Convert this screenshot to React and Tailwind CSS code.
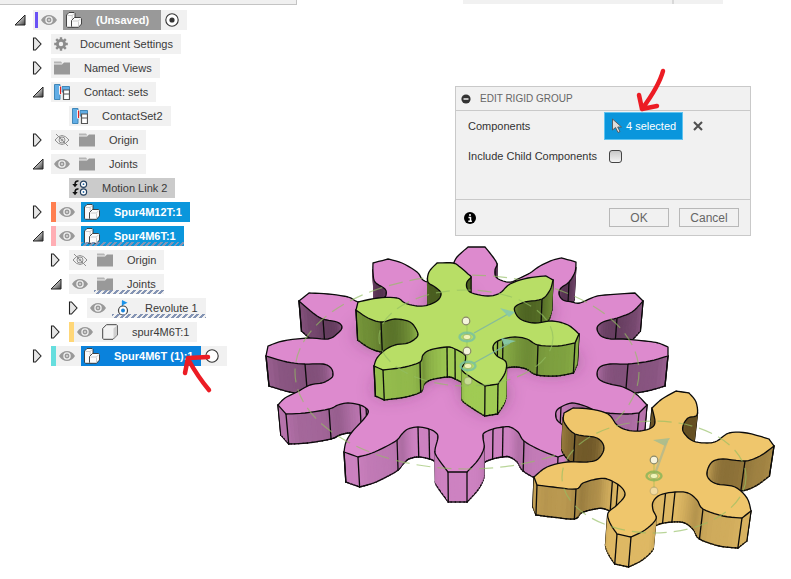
import React from "react";

/* ---------- browser tree icons ---------- */

function Expander({ open }) {
  return open ? (
    <svg className="block h-3 w-3" viewBox="0 0 12 12">
      <defs>
        <linearGradient id="openArrow" x1="0" y1="0" x2="1" y2="1">
          <stop offset="0.3" stopColor="#e8e8e8" />
          <stop offset="1" stopColor="#3a3a3a" />
        </linearGradient>
      </defs>
      <path d="M11 1V11H1Z" fill="url(#openArrow)" stroke="#222" strokeWidth="1" />
    </svg>
  ) : (
    <svg className="block h-3.5 w-3" viewBox="0 0 12 14">
      <path d="M1.500 1H3.500L9 7L3.500 13H1.500Z" fill="#e6e6e6" stroke="#222" strokeWidth="1.1" />
    </svg>
  );
}

function Eye({ off }) {
  return (
    <svg className="block h-3.5 w-4 shrink-0" viewBox="0 0 16 14">
      {off ? (
        <g fill="none" stroke="#8f8f8f" strokeWidth="1">
          <path d="M1 7Q8 -2 15 7Q8 16 1 7Z" />
          <circle cx="8" cy="7" r="3" />
          <circle cx="8" cy="7" r="1" />
          <path d="M2 1L14 13" />
        </g>
      ) : (
        <g>
          <path d="M0 7C4 0.300 12 0.300 16 7C12 13.700 4 13.700 0 7Z" fill="#999" />
          <circle cx="8" cy="7" r="3.100" fill="#999" stroke="#eee" strokeWidth="1.300" />
          <circle cx="8" cy="7" r="1" fill="#ddd" />
        </g>
      )}
    </svg>
  );
}

function Gear() {
  return (
    <svg className="block h-3.5 w-3.5 shrink-0" viewBox="0 0 14 14">
      <g stroke="#8c8c8c" fill="none">
        <circle cx="7" cy="7" r="3.6" strokeWidth="2.800" />
        <path d="M7 0.200V3M7 11V13.800M0.200 7H3M11 7H13.800M2.200 2.200L4.200 4.200M9.800 9.800L11.800 11.800M11.800 2.200L9.800 4.200M4.200 9.800L2.200 11.800" strokeWidth="2.400" />
      </g>
    </svg>
  );
}

function Folder() {
  return (
    <svg className="block h-4 w-4 shrink-0" viewBox="0 0 16 16">
      <path d="M0 1.500H7L8.500 3.500H0Z" fill="#b5b5b5" />
      <path d="M0 4.500H8L10 2.500H16V14.500H0Z" fill="#999" />
    </svg>
  );
}

function Contact() {
  return (
    <svg className="block h-4 w-4 shrink-0" viewBox="0 0 16 16">
      <path d="M0.500 0.500H6V15.500H0.500Z" fill="#62aee6" stroke="#4187b8" />
      <path d="M8 2.500H15.500V8H8Z" fill="#62aee6" stroke="#4187b8" />
      <path d="M6.200 2V10.500" stroke="#fff" strokeWidth="2.400" />
      <path d="M6.500 2.500V10" stroke="#e02020" strokeWidth="1.200" />
      <path d="M9.500 6H15.500V15.500H9.500ZM9.500 10H15.500" fill="#fff" stroke="#555" strokeWidth="1.200" />
    </svg>
  );
}

function Assembly() {
  return (
    <svg className="block h-4 w-4 shrink-0" viewBox="0 0 16 16">
      <g stroke="#333" strokeWidth="0.900" strokeLinejoin="round">
        <path d="M0.500 3L3 0.500H8L9 1.500V8L7 15.300H1.500L0.500 14.300Z" fill="#fbfbfb" />
        <path d="M5.500 8.500L8.500 5.500H14.500L15.500 6.500V12L12.500 15.300H6.500L5.500 14.300Z" fill="#fbfbfb" />
        <path d="M1.500 3.500H6L8.300 1.500M6.200 3.500V7M6.500 9H12.300L14.800 6.500M12.500 9.500V14.500" fill="none" stroke="#c6c6c6" />
      </g>
    </svg>
  );
}

function Cube() {
  return (
    <svg className="block h-4 w-4 shrink-0" viewBox="0 0 16 16">
      <path d="M0.700 4.500L4.500 0.700H14.500L15.300 1.500V11L11 15.300H1.700L0.700 14.500Z" fill="#f3f3f3" stroke="#444" strokeLinejoin="round" />
      <path d="M11.500 4.500L15 1.500V11L11.500 14.500Z" fill="#cfcfcf" />
    </svg>
  );
}

function MotionLink() {
  return (
    <svg className="block h-4 w-4 shrink-0" viewBox="0 0 16 16">
      <g fill="#fff" stroke="#24405f" strokeWidth="1.200">
        <circle cx="11.500" cy="4.200" r="3.100" />
        <circle cx="11.500" cy="12" r="3.100" />
      </g>
      <circle cx="11.500" cy="4.200" r="0.900" fill="#2468a8" />
      <circle cx="11.500" cy="12" r="0.900" fill="#2468a8" />
      <path d="M6.500 1Q3 0.500 3 4.500M6.500 9Q3 8.500 3 12.500" fill="none" stroke="#111" strokeWidth="1.600" />
      <path d="M0.300 4H5.700L3 7.300ZM0.300 12H5.700L3 15.300Z" fill="#111" />
    </svg>
  );
}

function Revolute() {
  return (
    <svg className="block h-4 w-4 shrink-0" viewBox="0 0 16 16">
      <path d="M7 0L12.500 2.800L7 5.500Z" fill="#1b93ea" />
      <path d="M7.500 1V8" stroke="#1b93ea" strokeWidth="1.300" />
      <circle cx="8" cy="10.500" r="4.500" fill="#fff" stroke="#444" strokeWidth="1.200" />
      <circle cx="8" cy="10.500" r="2" fill="#1b83d8" />
    </svg>
  );
}

const ICONS = {
  gear: Gear,
  folder: Folder,
  contact: Contact,
  assembly: Assembly,
  cube: Cube,
  link: MotionLink,
  revolute: Revolute,
};

/* ---------- browser tree ---------- */

const INDENT = ["pl-[15px]", "pl-[33px]", "pl-[51px]", "pl-[69px]"];

const ROWS = [
  { depth: 0, open: true, icon: "assembly", label: "(Unsaved)", eye: "on", bar: "bg-[#6a52f5]", tone: "grey", radio: "on", slim: true },
  { depth: 1, open: false, icon: "gear", label: "Document Settings", pad: "gap-3" },
  { depth: 1, open: false, icon: "folder", label: "Named Views" },
  { depth: 1, open: true, icon: "contact", label: "Contact: sets" },
  { depth: 2, icon: "contact", label: "ContactSet2" },
  { depth: 1, open: false, icon: "folder", label: "Origin", eye: "off" },
  { depth: 1, open: true, icon: "folder", label: "Joints", eye: "on" },
  { depth: 2, icon: "link", label: "Motion Link 2", dim: true },
  { depth: 1, open: false, icon: "assembly", label: "Spur4M12T:1", eye: "on", bar: "bg-[#ff7f50]", tone: "blue" },
  { depth: 1, open: true, icon: "assembly", label: "Spur4M6T:1", eye: "on", bar: "bg-[#ffaeb4]", tone: "blue", hatch: true },
  { depth: 2, open: false, icon: "folder", label: "Origin", eye: "off" },
  { depth: 2, open: true, icon: "folder", label: "Joints", eye: "on", hatch: true },
  { depth: 3, open: false, icon: "revolute", label: "Revolute 1", eye: "on", hatch: true },
  { depth: 2, open: false, icon: "cube", label: "spur4M6T:1", eye: "on", bar: "bg-[#ffd778]" },
  { depth: 1, open: false, icon: "assembly", label: "Spur4M6T (1):1", eye: "on", bar: "bg-[#66dede]", tone: "active", radio: "off", arrow: true },
];

const TONES = {
  grey: "bg-[#999999] text-white font-bold pr-3",
  blue: "bg-[#0a96dc] text-white font-bold pr-2",
  active: "bg-[#0a82dc] text-white font-bold pr-2",
};

function Hatch() {
  return (
    <span className="absolute right-0 bottom-0 left-0 h-1 bg-[repeating-linear-gradient(135deg,#8494b4_0px,#8494b4_2px,transparent_2px,transparent_4px)]" />
  );
}

function Row({ row }) {
  const Icon = ICONS[row.icon];
  const tone = row.tone ? TONES[row.tone] : "text-[#3a3a3a] pr-2";
  return (
    <li className={"flex h-5 items-center " + INDENT[row.depth]}>
      <button className="flex w-[18px] shrink-0" aria-label={"Toggle " + row.label}>
        {row.open !== undefined && (
          <span className="-ml-px">
            <Expander open={row.open} />
          </span>
        )}
      </button>
      <div className={"relative flex h-5 items-center " + (row.dim ? "bg-[#cbcbcb]" : "bg-[#f1f1f1]")}>
        {row.bar && <span className={"shrink-0 " + row.bar + (row.slim ? " ml-0.5 h-4 w-[3px]" : " h-5 w-[5px]")} />}
        {row.eye && (
          <span className="pr-1.5 pl-[3px]">
            <Eye off={row.eye === "off"} />
          </span>
        )}
        <div className={"relative flex h-5 items-center pl-[3px] whitespace-nowrap " + (row.pad || "gap-3.5") + " " + tone}>
          <Icon />
          <span>{row.label}</span>
          {row.hatch && <Hatch />}
        </div>
        {row.radio && (
          <svg className="mr-2 ml-1 block h-3.5 w-3.5 shrink-0" viewBox="0 0 14 14">
            <circle cx="7" cy="7" r="6.200" fill="#fff" stroke="#333" strokeWidth="1.100" />
            {row.radio === "on" && <circle cx="7" cy="7" r="2.600" fill="#333" />}
          </svg>
        )}
        {row.arrow && (
          <svg className="absolute -right-0.5 -bottom-[30px] h-12 w-12" viewBox="181 348 48 48" aria-hidden="true">
            <path d="M208 357L188 358L185 373M188 359Q198 377 209 390" fill="none" stroke="#ec1c24" strokeWidth="4.500" strokeLinecap="round" strokeLinejoin="round" />
          </svg>
        )}
      </div>
    </li>
  );
}

/* ---------- dialog ---------- */

function Dialog() {
  return (
    <form className="relative mt-[81px] mr-10 ml-auto w-[296px] border border-[#c9c9c9] bg-[#f1f1f1]" onSubmit={(e) => e.preventDefault()}>
      <header className="flex h-6 items-center border-b border-[#c9c9c9] pl-[5px]">
        <svg className="block h-2.5 w-2.5" viewBox="0 0 10 10">
          <circle cx="5" cy="5" r="4.600" fill="#333" />
          <path d="M2.500 5H7.500" stroke="#fff" strokeWidth="1.400" />
        </svg>
        <h2 className="pl-[9px] text-[10px] text-[#666]">EDIT RIGID GROUP</h2>
      </header>
      <div className="flex h-22 flex-col pl-3">
        <div className="flex h-[30px] items-center">
          <span className="w-34">Components</span>
          <button className="flex h-7 w-[79px] items-center gap-[3px] border border-[#5fc3f0] bg-[#0a96dc] pl-1.5 text-white">
            <svg className="block h-4 w-3" viewBox="0 0 12 16">
              <path d="M1.500 1V12L4.500 9.500L7 14.500L9 13.500L6.700 9H10.500Z" fill="#ddd" stroke="#555" strokeWidth="0.900" />
            </svg>
            <span className="whitespace-nowrap">4 selected</span>
          </button>
          <button className="ml-2.5" aria-label="Clear selection">
            <svg className="block h-2.5 w-2.5" viewBox="0 0 10 10">
              <path d="M1 1L9 9M9 1L1 9" stroke="#505050" strokeWidth="2.100" />
            </svg>
          </button>
        </div>
        <div className="flex h-[30px] items-center">
          <label htmlFor="child" className="w-[141px]">Include Child Components</label>
          <input id="child" type="checkbox" className="h-[13px] w-[13px] appearance-none rounded-[3px] border border-[#444] bg-linear-to-b from-[#c8c8c8] to-[#f4f4f4]" />
        </div>
      </div>
      <footer className="flex h-9 items-center gap-2.5 border-t border-[#c9c9c9] pr-[11px] pl-2">
        <svg className="mr-auto block h-3 w-3" viewBox="0 0 12 12">
          <circle cx="6" cy="6" r="6" fill="#000" />
          <path d="M6 2V4M4.500 5.500H6.500V9M4.300 9.200H7.900" stroke="#fff" strokeWidth="1.500" fill="none" />
        </svg>
        <button className="h-[19px] w-15 border border-[#b8b8b8] text-xs leading-none text-[#666]">OK</button>
        <button className="h-[19px] w-15 border border-[#b8b8b8] text-xs leading-none text-[#666]">Cancel</button>
      </footer>
      <svg className="pointer-events-none absolute -top-5 left-[175px] h-12 w-12" viewBox="631 67 48 48" aria-hidden="true">
        <path d="M663 71Q659 86 642 109M639 95L642 109L657 106" fill="none" stroke="#ec1c24" strokeWidth="4.500" strokeLinecap="round" strokeLinejoin="round" />
      </svg>
    </form>
  );
}

/* ---------- 3D gears ----------
   Each outline runs clockwise; "/" marks a sharp corner between smooth runs. */

const PINK = {
  center: [467, 365],
  dark: [66, 38, 62],
  light: [205, 130, 193],
  top: "#dd8ace",
  outline:
    "453,265 457,257 468,247/485,247/493,257 497,264 495,270 496,277 503,281 511,282 520,278 530,273 540,266 553,260 562,258/576,262/575,272 569,282 561,288 559,294 563,300 572,302 580,303 594,297 605,295 635,293/643,301/632,312 617,318 603,322 597,328 601,336 611,339 623,339 645,341 658,343 668,347/668,356/650,361 628,364 610,364 600,367 597,374 600,380 610,384 623,387 636,394 647,405/639,413/625,414 600,412 585,406 572,403 561,407 556,412 557,420 565,427 571,435 573,452/558,457/540,450 524,441 518,432 510,427 503,427 493,429 484,433 483,438 484,448 478,460 467,472/448,472/437,457 435,450 438,437 435,432 429,429 418,427 408,429 402,434 397,440 387,446 372,453 358,457/344,452/346,442 352,432 363,420 368,413 367,409 360,405 348,403 338,405 329,409 305,413 286,414/278,405/285,398 297,392 310,385 322,383 330,379 333,375 331,368 323,364 305,364 287,362 266,356/268,346/283,341 308,338 328,339 338,333 342,327 337,322 323,319 313,313 299,301/309,293/328,294 348,297 358,302 370,303 383,298 386,295 385,289 375,282 373,272 373,263/388,259/402,263 417,272 422,279 428,282 440,281 451,272 453,265",
  seams: "617,318 628,364 323,319 305,364 329,409 360,405 366,408 397,440 418,427 429,429 493,429 503,427 524,441 569,282 561,407",
};

const GREEN = {
  center: [466, 330],
  dark: [64, 82, 26],
  light: [160, 203, 84],
  top: "#b8de66",
  outline:
    "437,263 453,263 460,267 468,274 471,277 467,282 467,288 472,293 488,296 500,293 510,284 528,278 546,276/553,280/550,290 542,299 525,302 515,307 516,314 522,320 535,323 552,321 568,325 579,334/575,343/558,346 538,345 527,339 515,337 503,339 495,343 493,349 497,356 506,362 505,373 498,384/485,386/472,378 462,370 465,362 465,355 455,349 447,347 430,350 423,355 420,362 405,367 383,370/374,366/377,358 385,350 395,345 408,343 417,337 417,331 410,322 395,319 381,322 368,318 356,310/358,302/378,298 397,298 405,303 417,306 428,305 438,300 441,293 435,287 428,282 429,272 437,263",
  seams: "381,322 420,362 447,347 455,349 541,299 538,345 503,339 498,341",
};

const ORANGE = {
  center: [654, 465],
  dark: [88, 68, 28],
  light: [222, 184, 100],
  top: "#efc66c",
  outline:
    "652,408 662,399 676,391/689,393/696,402 697,415 688,418 683,426 684,433 693,441 707,443 717,441 729,433 747,433 769,439/774,446/760,456 745,461 723,459 712,462 707,472 709,479 717,484 735,487 747,498 751,511/742,518/723,516 703,509 697,500 688,493 675,492 660,495 653,502 653,510 656,519 645,530 631,537/617,534/610,523 608,513 617,505 625,495 620,486 607,479 597,479 583,483 576,489 553,487 537,485/534,477/547,467 567,462 587,462 598,459 604,448 597,438 575,434 564,422 564,413/573,408/590,409 608,414 617,425 627,430 640,431 651,428 655,422 652,408",
  seams: "745,461 576,489 613,482 619,485 665,494 674,492 703,509 575,434",
};

const parse = (s) => s.trim().split(" ").map((p) => p.split(",").map(Number));

function sampleOutline(text) {
  const out = [];
  const corners = [];
  let last = null;
  text.split("/").forEach((run) => {
    const pts = parse(run);
    const all = last ? [last, ...pts] : pts;
    for (let i = 0; i < all.length - 1; i++) {
      const p0 = all[Math.max(0, i - 1)];
      const p1 = all[i];
      const p2 = all[i + 1];
      const p3 = all[Math.min(all.length - 1, i + 2)];
      for (let k = 0; k < 5; k++) {
        const t = k / 5;
        const f = (a, b, c, d) =>
          0.5 * (2 * b + (c - a) * t + (2 * a - 5 * b + 4 * c - d) * t * t + (3 * b - a - 3 * c + d) * t * t * t);
        out.push([f(p0[0], p1[0], p2[0], p3[0]), f(p0[1], p1[1], p2[1], p3[1])]);
      }
    }
    last = pts[pts.length - 1];
    corners.push(last);
  });
  corners.pop();
  return { points: out, corners };
}

function build(gear) {
  const { points, corners } = sampleOutline(gear.outline);
  const n = points.length;
  const drop = (p) => [p[0] + (467 - p[0]) * 0.015, p[1] + 30];
  const items = [];
  const facing = points.map((p, i) => {
    const q = points[(i + 1) % n];
    const d = drop(p);
    return (q[1] - p[1]) * (d[0] - p[0]) - (q[0] - p[0]) * 30 > 0;
  });
  const level = points.map((p, i) => {
    const q = points[(i + 1) % n];
    const len = Math.hypot(q[0] - p[0], q[1] - p[1]) || 1;
    const nx = (q[1] - p[1]) / len;
    const ny = (p[0] - q[0]) / len;
    const rx = p[0] - gear.center[0];
    const ry = (p[1] - gear.center[1]) * 1.6;
    const r = Math.hypot(rx, ry) || 1;
    return 0.46 + (0.34 * (nx * rx + ny * ry)) / r + (0.3 * ry) / r;
  });
  points.forEach((p, i) => {
    const q = points[(i + 1) % n];
    if (facing[i]) {
      let sum = 0;
      for (let k = -3; k <= 3; k++) sum += level[(i + k + n) % n];
      const v = Math.min(1, Math.max(0.1, sum / 7));
      const c = gear.dark.map((a, k) => Math.round(a + (gear.light[k] - a) * v));
      const a = drop(p);
      const b = drop(q);
      items.push({ z: (p[1] + q[1]) / 2, kind: "wall", pts: [p, q, b, a].join(" "), fill: `rgb(${c.join(",")})` });
      items.push({ z: (p[1] + q[1]) / 2 + 1, kind: "line", from: a, to: b });
    }
    if (facing[i] !== facing[(i + n - 1) % n]) items.push({ z: p[1] + 1.5, kind: "line", from: p, to: drop(p) });
  });
  [...corners, ...parse(gear.seams)].forEach((s) => {
    let best = 0;
    points.forEach((p, i) => {
      if (Math.hypot(p[0] - s[0], p[1] - s[1]) < Math.hypot(points[best][0] - s[0], points[best][1] - s[1])) best = i;
    });
    if (facing[best] || facing[(best + n - 1) % n]) {
      items.push({ z: points[best][1] + 1.5, kind: "line", from: points[best], to: drop(points[best]) });
    }
  });
  items.sort((a, b) => a.z - b.z);
  return { items, path: "M" + points.map((p) => p.join(" ")).join("L") + "Z" };
}

const SOLIDS = { pink: build(PINK), green: build(GREEN), orange: build(ORANGE) };

function Solid({ solid, top, children }) {
  return (
    <g strokeLinejoin="round">
      {solid.items.map((it, i) =>
        it.kind === "wall" ? (
          <polygon key={i} points={it.pts} fill={it.fill} stroke={it.fill} strokeWidth="1.200" />
        ) : (
          <line key={i} x1={it.from[0]} y1={it.from[1]} x2={it.to[0]} y2={it.to[1]} stroke="#0b0b0b" strokeWidth="1.300" strokeLinecap="square" />
        )
      )}
      <path d={solid.path} fill={top} />
      {children}
      <path d={solid.path} fill="none" stroke="#0b0b0b" strokeWidth="1.300" />
    </g>
  );
}

function Pitch({ cx, cy, rx, ry }) {
  return <ellipse cx={cx} cy={cy} rx={rx} ry={ry} fill="none" stroke="#94bf62" strokeOpacity="0.65" strokeWidth="1.200" strokeDasharray="14 7" />;
}

function Dot({ x, y, faint }) {
  return <circle cx={x} cy={y} r="3.800" fill="#f7f5e2" fillOpacity={faint ? 0.45 : 0.95} stroke="#8b8a6a" strokeOpacity={faint ? 0.4 : 1} strokeWidth="1.200" />;
}

function Ring({ x, y, color }) {
  return (
    <g>
      <ellipse cx={x} cy={y} rx="7.500" ry="4.300" fill="none" stroke={color} strokeWidth="2.400" strokeOpacity="0.8" />
      <ellipse cx={x} cy={y} rx="4" ry="2.700" fill="#f0f3b8" stroke="#8fae60" strokeWidth="0.800" />
    </g>
  );
}

function Gears() {
  return (
    <svg className="mt-1 block h-auto w-full" viewBox="240 240 551 339" role="img" aria-label="Three meshed spur gears">
      <defs>
        <clipPath id="pinkTop">
          <path d={SOLIDS.pink.path} />
        </clipPath>
        <filter id="soft" x="-20%" y="-20%" width="140%" height="140%">
          <feGaussianBlur stdDeviation="9" />
        </filter>
      </defs>
      <Solid solid={SOLIDS.pink} top={PINK.top}>
        <g clipPath="url(#pinkTop)">
          <path d={SOLIDS.green.path} transform="translate(0 26)" fill="#5c2f58" fillOpacity="0.55" filter="url(#soft)" />
        </g>
      </Solid>
      <Pitch cx={467} cy={372} rx={172} ry={97} />
      <Solid solid={SOLIDS.green} top={GREEN.top} />
      <Pitch cx={466} cy={338} rx={87} ry={48} />
      <Solid solid={SOLIDS.orange} top={ORANGE.top} />
      <Pitch cx={654} cy={477} rx={92} ry={56} />

      <g stroke="#7cb5a4" strokeWidth="1.400" strokeOpacity="0.85">
        <path d="M474 333L508 314M474 363L510 343" />
        <path d="M656 471L667 441" stroke="#b5b98c" strokeWidth="2.200" />
      </g>
      <g fill="#86c9ad" fillOpacity="0.9">
        <path d="M500 308L515 312L509 317ZM501 338L516 341L504 345Z" />
        <path d="M653 440L670 438L665 446Z" fill="#a9bd8f" />
      </g>
      <path d="M467 324V377" stroke="#9ccb5c" strokeWidth="1" />
      <path d="M654 463V488" stroke="#b8bf58" strokeWidth="1" />
      <Dot x={466} y={321} />
      <Ring x={467} y={337} color="#74bfa2" />
      <Dot x={467} y={351} />
      <Ring x={468} y={366} color="#74bfa2" />
      <Dot x={468} y={381} faint />
      <Dot x={654} y={460} />
      <Ring x={654} y={476} color="#86b458" />
      <Dot x={654} y={491} faint />
    </svg>
  );
}

export default function App() {
  return (
    <div className="min-h-screen overflow-hidden bg-white font-['Liberation_Sans',Arial,sans-serif] text-[11px] leading-4 text-[#333]">
      <div className="flex h-[5px] items-start">
        <div className="h-[5px] w-[297px] border-r border-b border-[#c4c4c4] bg-[#f0f0f0]" />
        <div className="ml-[166px] flex h-1 w-[260px] bg-[#f1f1f1]">
          <div className="ml-[209px] h-1 w-0.5 bg-[#d8d8d8]" />
        </div>
      </div>
      <main className="flex items-start">
        <nav className="relative z-10 w-60 shrink-0 pt-[5px]" aria-label="Browser">
          <ul className="flex flex-col gap-1">
            {ROWS.map((row, i) => (
              <Row key={i} row={row} />
            ))}
          </ul>
        </nav>
        <section className="min-w-0 flex-1">
          <Dialog />
          <Gears />
        </section>
      </main>
    </div>
  );
}
